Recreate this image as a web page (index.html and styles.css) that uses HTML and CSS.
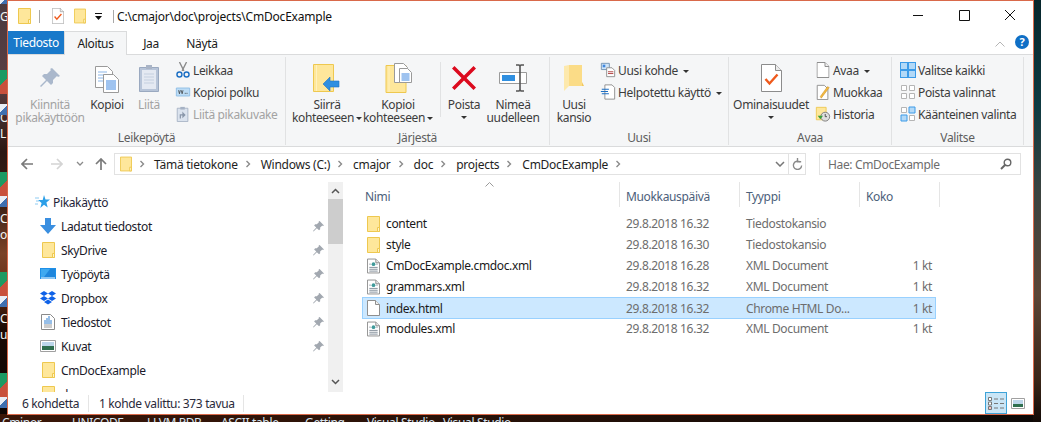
FILE: index.html
```html
<!DOCTYPE html>
<html lang="fi">
<head>
    <meta charset="UTF-8">
    <title>CmDocExample</title>
    <link rel="stylesheet" href="styles.css">
</head>
<body>
    <!-- Shared icons -->
    <svg class="sprite" width="0" height="0">
        <symbol id="i-folder" viewBox="0 0 13 16">
            <path d="M.5.5h12v15H.5z" fill="#fee79b" stroke="#eec84f"/>
            <path d="M10.5 11.5h2v4h-2z" fill="#fff4c8" stroke="#eec84f"/>
        </symbol>
        <symbol id="i-xml" viewBox="0 0 14 16">
            <path d="M.5.5h9l4 4v11H.5z" fill="#fff" stroke="#8a8a8a"/>
            <path d="M9.5.5v4h4" fill="#e8e8e8" stroke="#8a8a8a"/>
            <circle cx="7" cy="6" r="2" fill="#3f9a9a"/>
            <path d="M2.500 6h1.500M10 6h1.500M2.500 9.500h9M2.500 11.500h9M2.500 13.500h9" stroke="#7f8a96"/>
        </symbol>
        <symbol id="i-file" viewBox="0 0 13 16">
            <path d="M.5.5h8l4 4v11H.5z" fill="#fff" stroke="#8f8f8f"/>
            <path d="M8.500.5v4h4" fill="#f0f0f0" stroke="#8f8f8f"/>
        </symbol>
        <symbol id="i-pin" viewBox="0 0 20 20">
            <path d="M12 0l8 8-2 1-1-1-4 4v3l-2 2-4-4-6 6-1-1 6-6-4-4 2-2h3l4-4-1-1z"/>
        </symbol>
        <symbol id="i-check-doc" viewBox="0 0 21 28">
            <path d="M.5.500h14l6 6v21H.5z" fill="#fff" stroke="#8c8c8c"/>
            <path d="M14.500.5v6h6" fill="#ececec" stroke="#8c8c8c"/>
            <path d="M4.500 15l4 4.500 8-9" fill="none" stroke="#ef5a1c" stroke-width="2.400"/>
        </symbol>
        <symbol id="i-big-folder" viewBox="0 0 21 28">
            <path d="M.5.5h20v27H.5z" fill="#fee79b" stroke="#eec84f"/>
            <path d="M3.500 1v26" stroke="#fff1bd"/>
        </symbol>
        <symbol id="i-chev" viewBox="0 0 6 8">
            <path d="M1.500 1l3 3-3 3" fill="none" stroke="#8a8a8a" stroke-width="1.400"/>
        </symbol>
    </svg>

    <div class="desktop">
        <!-- Desktop icons and labels showing beside the window -->
        <span class="edge-label edge-gi">Gi</span>
        <span class="edge-label edge-og">Og</span>
        <span class="edge-label edge-l">L</span>
        <span class="edge-label edge-c1">C</span>
        <span class="edge-label edge-oo">oo</span>
        <span class="edge-label edge-c2">C</span>
        <span class="edge-label edge-u">u</span>
        <i class="edge-tree tree-1"></i>
        <i class="edge-tree tree-2"></i>
        <i class="edge-tree tree-3"></i>
        <i class="edge-tree tree-4"></i>
        <i class="edge-link link-0"></i>
        <i class="edge-link link-1"></i>
        <i class="edge-link link-2"></i>
        <i class="edge-link link-3"></i>
        <i class="edge-link link-4"></i>
        <span class="bottom-label bl-1">Cminor</span>
        <span class="bottom-label bl-2">UNICODE</span>
        <span class="bottom-label bl-3">LLVM PDB</span>
        <span class="bottom-label bl-4">ASCII table</span>
        <span class="bottom-label bl-5">Getting</span>
        <span class="bottom-label bl-6">Visual Studio</span>
        <span class="bottom-label bl-7">Visual Studio</span>

        <div class="window">
            <div class="titlebar">
                <svg class="qat-folder"><use href="#i-folder"/></svg>
                <i class="qat-sep"></i>
                <svg class="qat-check" viewBox="0 0 21 28"><use href="#i-check-doc"/></svg>
                <svg class="qat-folder2"><use href="#i-folder"/></svg>
                <svg class="qat-drop" viewBox="0 0 9 7"><path d="M1 0h7v1H1zM1 3h7L4.500 7z" fill="#111"/></svg>
                <i class="qat-sep"></i>
                <span class="title-text">C:\cmajor\doc\projects\CmDocExample</span>
                <div class="win-controls">
                    <svg viewBox="0 0 46 30"><path d="M18 14.500h10" stroke="#111"/></svg>
                    <svg viewBox="0 0 46 30"><path d="M18.500 9.500h10v10h-10z" fill="none" stroke="#111"/></svg>
                    <svg viewBox="0 0 46 30"><path d="M18 9l10 10M28 9L18 19" stroke="#111"/></svg>
                </div>
            </div>

            <div class="tabs">
                <span class="tab tab-file">Tiedosto</span>
                <span class="tab tab-active">Aloitus</span>
                <span class="tab tab-share">Jaa</span>
                <span class="tab tab-view">Näytä</span>
                <svg class="collapse" viewBox="0 0 10 6"><path d="M.5 5.500L5 1l4.500 4.500" fill="none" stroke="#b5b5b5"/></svg>
                <span class="help">?</span>
            </div>

            <div class="ribbon">
                <!-- Leikepöytä -->
                <div class="group group-clip">
                    <div class="group-body">
                        <div class="big disabled w-pin">
                            <div class="big-icon"><svg class="ico-pin" width="20" height="20"><use href="#i-pin"/></svg></div>
                            <div>Kiinnitä<br>pikakäyttöön</div>
                        </div>
                        <div class="big w-copy">
                            <div class="big-icon">
                                <svg width="24" height="30" viewBox="0 0 24 30">
                                    <path d="M.5 3.500h12l5 5v16H.5z" fill="#fff" stroke="#9a9a9a"/>
                                    <path d="M3 9h9M3 12h9M3 15h9M3 18h9" stroke="#8db7e8"/>
                                    <path d="M8.500 11.500h10l5 5v13h-15z" fill="#fff" stroke="#9a9a9a"/>
                                    <path d="M11 18h10M11 20h10M11 22h10M11 24h10M11 26h10" stroke="#3f87e0"/>
                                </svg>
                            </div>
                            <div>Kopioi</div>
                        </div>
                        <div class="big disabled w-paste">
                            <div class="big-icon">
                                <svg width="20" height="30" viewBox="0 0 20 30">
                                    <path d="M.5 4.500h19v24H.5z" fill="#b7c4d8" stroke="#9aa9c0"/>
                                    <path d="M3 7h14v19H3z" fill="#e4e9f2"/>
                                    <path d="M5 11h10M5 14h10M5 17h10M5 20h10" stroke="#c4cfdf"/>
                                    <path d="M7 2h6v4H7z" fill="#a9b4c6"/>
                                </svg>
                            </div>
                            <div>Liitä</div>
                        </div>
                        <div class="small-col col-clip">
                            <div class="small">
                                <svg viewBox="0 0 16 18">
                                    <path d="M4 0l5 10M12 0L7 10" stroke="#8a8a8a" stroke-width="1.500"/>
                                    <circle cx="4" cy="14" r="2.800" fill="none" stroke="#1c6fc4" stroke-width="1.600"/>
                                    <circle cx="12" cy="14" r="2.800" fill="none" stroke="#1c6fc4" stroke-width="1.600"/>
                                </svg>
                                <span>Leikkaa</span>
                            </div>
                            <div class="small">
                                <svg viewBox="0 0 16 18">
                                    <path d="M.5 4.500h15v9H.5z" fill="#bcdcf5" stroke="#8dbde6"/>
                                    <path d="M3 7l1 4 1-4M6 7l1 4 1-4" fill="none" stroke="#333" stroke-width=".8"/>
                                    <path d="M10 10.500h1M12 10.500h1" stroke="#333"/>
                                </svg>
                                <span>Kopioi polku</span>
                            </div>
                            <div class="small disabled">
                                <svg viewBox="0 0 16 18">
                                    <path d="M1.500 2.500h12v15h-12z" fill="#dbe3ee" stroke="#a6b2c4"/>
                                    <path d="M5 1h5v3H5z" fill="#a6b2c4"/>
                                    <path d="M5 14V10h4M8 8l2 2-2 2z" fill="none" stroke="#8a97aa" stroke-width="1.400"/>
                                </svg>
                                <span>Liitä pikakuvake</span>
                            </div>
                        </div>
                    </div>
                    <div class="group-label">Leikepöytä</div>
                </div>

                <!-- Järjestä -->
                <div class="group group-org">
                    <div class="group-body">
                        <div class="big w-move">
                            <div class="big-icon">
                                <svg width="28" height="28" viewBox="0 0 28 28">
                                    <use href="#i-big-folder" width="21" height="28"/>
                                    <path d="M10 20l7-7v4h9v6h-9v4z" fill="#2f8fe0" stroke="#1f74c4" stroke-width=".6"/>
                                </svg>
                            </div>
                            <div>Siirrä<br>kohteeseen<i class="caret caret-inline"></i></div>
                        </div>
                        <div class="big w-copyto">
                            <div class="big-icon">
                                <svg width="27" height="30" viewBox="0 0 27 30">
                                    <use href="#i-big-folder" y="2" width="22" height="28"/>
                                    <path d="M9.500 .5h9l4 4v15h-13z" fill="#fff" stroke="#9a9a9a"/>
                                    <path d="M14.500 5.500h8l4 4v10h-12z" fill="#fff" stroke="#9a9a9a"/>
                                    <path d="M16.500 11h8M16.500 13h8M16.500 15h8M16.500 17h8" stroke="#3f87e0"/>
                                </svg>
                            </div>
                            <div>Kopioi<br>kohteeseen<i class="caret caret-inline"></i></div>
                        </div>
                        <i class="inner-sep"></i>
                        <div class="big w-del">
                            <div class="big-icon">
                                <svg width="26" height="26" viewBox="0 0 26 26"><path d="M3.500 1L13 10.500 22.500 1 25 3.500 15.500 13 25 22.500 22.500 25 13 15.500 3.500 25 1 22.500 10.500 13 1 3.500z" fill="#dc0a1e"/></svg>
                            </div>
                            <div>Poista</div>
                            <i class="caret caret-line"></i>
                        </div>
                        <div class="big w-ren">
                            <div class="big-icon">
                                <svg width="28" height="28" viewBox="0 0 28 28">
                                    <path d="M.5 8.500h27v11H.5z" fill="#fff" stroke="#9a9a9a"/>
                                    <path d="M3 11h13v6H3z" fill="#2f8fe0"/>
                                    <path d="M17 1h3l1 1 1-1h3M21 2v24M17 27h3l1-1 1 1h3" fill="none" stroke="#555" stroke-width="1.600"/>
                                </svg>
                            </div>
                            <div>Nimeä<br>uudelleen</div>
                        </div>
                    </div>
                    <div class="group-label">Järjestä</div>
                </div>

                <!-- Uusi -->
                <div class="group group-new">
                    <div class="group-body">
                        <div class="big w-newf">
                            <div class="big-icon">
                                <svg width="20" height="28" viewBox="0 0 20 28">
                                    <path d="M5 1h13v21H5z" fill="#fbdc87"/>
                                    <path d="M0 2l5-1v21l-5 5z" fill="#fde9ad"/>
                                    <path d="M5 22h15l-2-4v4z" fill="#f2c85e"/>
                                </svg>
                            </div>
                            <div>Uusi<br>kansio</div>
                        </div>
                        <div class="small-col col-new">
                            <div class="small">
                                <svg viewBox="0 0 16 18">
                                    <path d="M.5 1.500h9v7h-9z" fill="#cfe4f7" stroke="#6f8fb0"/>
                                    <path d="M2 3h3v3H2z" fill="#3f87e0"/>
                                    <path d="M6.500 6.500h6l3 3v7h-9z" fill="#fff" stroke="#8a8a8a"/>
                                    <path d="M8 11h6M8 13h6" stroke="#a33"/>
                                </svg>
                                <span>Uusi kohde<i class="caret caret-after"></i></span>
                            </div>
                            <div class="small">
                                <svg viewBox="0 0 16 18">
                                    <path d="M4.500 1h8l3 3v13h-11z" fill="#fff" stroke="#8a8a8a"/>
                                    <path d="M1 6h8M0 8.500h8M1 11h8" stroke="#1c6fc4" stroke-width="1.200"/>
                                </svg>
                                <span>Helpotettu käyttö<i class="caret caret-after"></i></span>
                            </div>
                        </div>
                    </div>
                    <div class="group-label">Uusi</div>
                </div>

                <!-- Avaa -->
                <div class="group group-open">
                    <div class="group-body">
                        <div class="big w-prop">
                            <div class="big-icon"><svg width="21" height="28"><use href="#i-check-doc"/></svg></div>
                            <div>Ominaisuudet</div>
                            <i class="caret caret-line"></i>
                        </div>
                        <div class="small-col col-open">
                            <div class="small">
                                <svg viewBox="0 0 13 16"><use href="#i-file"/></svg>
                                <span>Avaa<i class="caret caret-after"></i></span>
                            </div>
                            <div class="small">
                                <svg viewBox="0 0 16 18">
                                    <path d="M1.500 1.500h8l4 4v12h-12z" fill="#fff" stroke="#8a8a8a"/>
                                    <path d="M5 14l1 2 9-12-2-1z" fill="#f4b940" stroke="#c98f20" stroke-width=".6"/>
                                </svg>
                                <span>Muokkaa</span>
                            </div>
                            <div class="small">
                                <svg viewBox="0 0 16 18">
                                    <path d="M.5 1.500h11v14H.5z" fill="#fee79b" stroke="#eec84f"/>
                                    <circle cx="10.500" cy="12" r="5" fill="#dedede" stroke="#777"/>
                                    <path d="M10.500 9v3h2" fill="none" stroke="#444"/>
                                    <path d="M2 11l3 4 3-4z" fill="#3aa03a"/>
                                </svg>
                                <span>Historia</span>
                            </div>
                        </div>
                    </div>
                    <div class="group-label">Avaa</div>
                </div>

                <!-- Valitse -->
                <div class="group group-select">
                    <div class="group-body">
                        <div class="small-col">
                            <div class="small">
                                <svg viewBox="0 0 16 16">
                                    <path d="M0 0h16v16H0z" fill="#3c9be8"/>
                                    <path d="M1 1h6v6H1zM9 1h6v6H9zM1 9h6v6H1zM9 9h6v6H9z" fill="#b3d9f7"/>
                                </svg>
                                <span>Valitse kaikki</span>
                            </div>
                            <div class="small">
                                <svg viewBox="0 0 16 16">
                                    <path d="M1.500 1.500h5v5h-5zM9.500 1.500h5v5h-5zM1.500 9.500h5v5h-5zM9.500 9.500h5v5h-5z" fill="#fff" stroke="#b5b5b5"/>
                                </svg>
                                <span>Poista valinnat</span>
                            </div>
                            <div class="small">
                                <svg viewBox="0 0 16 16">
                                    <path d="M1.500 1.500h5v5h-5zM9.500 9.500h5v5h-5z" fill="#fff" stroke="#b5b5b5"/>
                                    <path d="M9 1h6v6H9zM1 9h6v6H1z" fill="#b3d9f7" stroke="#3c9be8"/>
                                </svg>
                                <span>Käänteinen valinta</span>
                            </div>
                        </div>
                    </div>
                    <div class="group-label">Valitse</div>
                </div>
            </div>

            <div class="addressbar">
                <svg class="nav-arrow" viewBox="0 0 12 12"><path d="M6 1L1 6l5 5M1 6h11" fill="none" stroke="#7a7a7a" stroke-width="1.700"/></svg>
                <svg class="nav-arrow nav-fwd" viewBox="0 0 12 12"><path d="M6 1l5 5-5 5M11 6H0" fill="none" stroke="#d4d4d4" stroke-width="1.700"/></svg>
                <svg class="nav-down" viewBox="0 0 8 5"><path d="M1 1l3 3 3-3" fill="none" stroke="#8a8a8a" stroke-width="1.300"/></svg>
                <svg class="nav-arrow nav-up" viewBox="0 0 12 12"><path d="M1 6l5-5 5 5M6 1v11" fill="none" stroke="#7a7a7a" stroke-width="1.700"/></svg>
                <div class="path-box">
                    <svg class="path-folder"><use href="#i-folder"/></svg>
                    <svg class="crumb-chev crumb-first"><use href="#i-chev"/></svg>
                    <span>Tämä tietokone</span>
                    <svg class="crumb-chev"><use href="#i-chev"/></svg>
                    <span>Windows (C:)</span>
                    <svg class="crumb-chev"><use href="#i-chev"/></svg>
                    <span>cmajor</span>
                    <svg class="crumb-chev"><use href="#i-chev"/></svg>
                    <span>doc</span>
                    <svg class="crumb-chev"><use href="#i-chev"/></svg>
                    <span>projects</span>
                    <svg class="crumb-chev"><use href="#i-chev"/></svg>
                    <span>CmDocExample</span>
                    <svg class="crumb-chev"><use href="#i-chev"/></svg>
                    <div class="path-tools">
                        <svg class="path-drop" viewBox="0 0 10 6"><path d="M1 1l4 4 4-4" fill="none" stroke="#777" stroke-width="1.500"/></svg>
                        <div class="path-refresh">
                            <svg viewBox="0 0 12 14"><path d="M9 4.500A4.500 4.500 0 1 0 10.500 8M6 0v4h4" fill="none" stroke="#8a8a8a" stroke-width="1.500"/></svg>
                        </div>
                    </div>
                </div>
                <div class="search-box">
                    <span>Hae: CmDocExample</span>
                    <svg viewBox="0 0 12 12"><circle cx="7.500" cy="4.500" r="3.300" fill="none" stroke="#666" stroke-width="1.400"/><path d="M5 7l-4 4" stroke="#666" stroke-width="2"/></svg>
                </div>
            </div>

            <div class="main">
                <div class="nav">
                    <div class="nav-head">
                        <svg viewBox="0 0 15 14"><path d="M9 0l1.500 4.500H15l-3.600 3 1.300 5-3.700-2.800L5.300 13l1.300-5-3.600-3h4.700z" fill="#2b9fe8"/><path d="M0 3h4M1 6h3M0 9h3" stroke="#8ecbf2"/></svg>
                        <span>Pikakäyttö</span>
                    </div>
                    <div class="nav-row">
                        <svg viewBox="0 0 16 16"><path d="M5 0h6v7h5l-8 9-8-9h5z" fill="#3a8fe0"/></svg>
                        <span>Ladatut tiedostot</span>
                        <svg class="pin"><use href="#i-pin"/></svg>
                    </div>
                    <div class="nav-row">
                        <svg class="nav-folder"><use href="#i-folder"/></svg>
                        <span>SkyDrive</span>
                        <svg class="pin"><use href="#i-pin"/></svg>
                    </div>
                    <div class="nav-row">
                        <svg viewBox="0 0 16 16"><path d="M0 2h16v11H0z" fill="#1e90e8"/><path d="M1 3h14v8H1z" fill="#3fa9f0"/><path d="M10 3h5v8H4z" fill="#1f86dc"/><path d="M1 12h14" stroke="#fff"/></svg>
                        <span>Työpöytä</span>
                        <svg class="pin"><use href="#i-pin"/></svg>
                    </div>
                    <div class="nav-row">
                        <svg viewBox="0 0 16 16"><path d="M4 1l4 2.500L4 6 0 3.500zM12 1l4 2.500L12 6 8 3.500zM4 6l4 2.500L4 11 0 8.500zM12 6l4 2.500L12 11 8 8.500zM8 9.500l4 2.500-4 2.500L4 12z" fill="#0f62e8"/></svg>
                        <span>Dropbox</span>
                        <svg class="pin"><use href="#i-pin"/></svg>
                    </div>
                    <div class="nav-row">
                        <svg viewBox="0 0 14 16"><path d="M.5.500h9l4 4v11H.5z" fill="#fff" stroke="#8a8a8a"/><path d="M7 3h2M5 5h4M3 7h8M3 9h8" stroke="#2f7fd0"/><path d="M3 11h8M3 13h8" stroke="#9a9a9a"/></svg>
                        <span>Tiedostot</span>
                        <svg class="pin"><use href="#i-pin"/></svg>
                    </div>
                    <div class="nav-row">
                        <svg viewBox="0 0 16 12"><path d="M.5.500h15v11H.5z" fill="#fff" stroke="#a0a0a0"/><path d="M2 2h12v4H2z" fill="#bcd6ea"/><path d="M2 6h12v4H2z" fill="#2f6f4f"/></svg>
                        <span>Kuvat</span>
                        <svg class="pin"><use href="#i-pin"/></svg>
                    </div>
                    <div class="nav-row">
                        <svg class="nav-folder"><use href="#i-folder"/></svg>
                        <span>CmDocExample</span>
                    </div>
                    <div class="nav-row">
                        <svg class="nav-folder"><use href="#i-folder"/></svg>
                        <span>doc</span>
                    </div>
                </div>

                <div class="scrollbar">
                    <svg viewBox="0 0 9 6"><path d="M1 5l3.500-3.500L8 5" fill="none" stroke="#555" stroke-width="1.500"/></svg>
                    <div class="thumb"></div>
                    <svg class="scroll-down" viewBox="0 0 9 6"><path d="M1 1l3.500 3.500L8 1" fill="none" stroke="#555" stroke-width="1.500"/></svg>
                </div>

                <div class="files">
                    <div class="file-head">
                        <span class="col-name">Nimi<svg class="sort" viewBox="0 0 9 5"><path d="M.5 4.500l4-4 4 4" fill="none" stroke="#9a9a9a"/></svg></span>
                        <span>Muokkauspäivä</span>
                        <span>Tyyppi</span>
                        <span>Koko</span>
                    </div>
                    <div class="file-row">
                        <span class="file-name"><svg class="ico-file"><use href="#i-folder"/></svg>content</span>
                        <span>29.8.2018 16.32</span>
                        <span>Tiedostokansio</span>
                        <span class="file-size"></span>
                    </div>
                    <div class="file-row">
                        <span class="file-name"><svg class="ico-file"><use href="#i-folder"/></svg>style</span>
                        <span>29.8.2018 16.30</span>
                        <span>Tiedostokansio</span>
                        <span class="file-size"></span>
                    </div>
                    <div class="file-row">
                        <span class="file-name"><svg class="ico-file"><use href="#i-xml"/></svg>CmDocExample.cmdoc.xml</span>
                        <span>29.8.2018 16.28</span>
                        <span>XML Document</span>
                        <span class="file-size">1 kt</span>
                    </div>
                    <div class="file-row">
                        <span class="file-name"><svg class="ico-file"><use href="#i-xml"/></svg>grammars.xml</span>
                        <span>29.8.2018 16.32</span>
                        <span>XML Document</span>
                        <span class="file-size">1 kt</span>
                    </div>
                    <div class="file-row selected">
                        <span class="file-name"><svg class="ico-file"><use href="#i-file"/></svg>index.html</span>
                        <span>29.8.2018 16.32</span>
                        <span>Chrome HTML Do...</span>
                        <span class="file-size">1 kt</span>
                    </div>
                    <div class="file-row">
                        <span class="file-name"><svg class="ico-file"><use href="#i-xml"/></svg>modules.xml</span>
                        <span>29.8.2018 16.32</span>
                        <span>XML Document</span>
                        <span class="file-size">1 kt</span>
                    </div>
                </div>
            </div>

            <div class="statusbar">
                <span class="status-count">6 kohdetta</span>
                <span class="status-sel">1 kohde valittu: 373 tavua</span>
                <div class="view-btns">
                    <div class="view-details">
                        <svg viewBox="0 0 17 13"><path d="M.5.500h3v3h-3zM.5 5h3v3h-3zM.5 9.500h3v3h-3z" fill="#fff" stroke="#777"/><path d="M1.500 10.500h1v1h-1z" fill="#d11"/><path d="M6 2h4M12 2h4M6 6.500h4M12 6.500h4M6 11h4M12 11h4" stroke="#777"/></svg>
                    </div>
                    <svg class="view-thumbs" viewBox="0 0 14 11"><path d="M.5.500h13v10H.5z" fill="#fff" stroke="#a0a0a0"/><path d="M2 2h10v4H2z" fill="#bcd6ea"/><path d="M2 6h10v3H2z" fill="#2f6f4f"/></svg>
                </div>
            </div>
        </div>
    </div>
</body>
</html>
```

FILE: styles.css
```css
* {
    margin: 0;
    padding: 0;
    box-sizing: border-box;
}

body {
    font-family: "Noto Sans", sans-serif;
    font-size: 12px;
    letter-spacing: -0.35px;
    overflow: hidden;
}

.sprite {
    position: absolute;
}

svg {
    display: block;
    flex-shrink: 0;
}

.desktop {
    position: relative;
    width: 1041px;
    height: 422px;
    overflow: hidden;
    padding-left: 7px;
    background:
        linear-gradient(180deg, #06262c 0%, #0f3a42 25%, #3a4340 45%, #5c4536 70%, #3a2618 90%, #120a06 100%) right top / 8px 100% no-repeat,
        linear-gradient(90deg, #3a1608 0%, #2a1208 40%, #0c0806 100%) left bottom / 100% 8px no-repeat,
        linear-gradient(180deg, #4a3a40 0%, #5a3f42 20%, #2c1712 36%, #3a1f14 48%, #7a4228 60%, #6a3018 68%, #1c0a04 78%, #0a0504 100%);
}

/* desktop bits next to the window */
.edge-label {
    position: absolute;
    left: 0;
    color: #f4f4f4;
    line-height: 14px;
}

.edge-gi { top: 10px; }
.edge-og { top: 111px; }
.edge-l { top: 127px; }
.edge-c1 { top: 212px; }
.edge-oo { top: 228px; }
.edge-c2 { top: 312px; }
.edge-u { top: 328px; }

.edge-tree {
    position: absolute;
    left: 0;
    width: 7px;
    height: 24px;
    background: linear-gradient(135deg, #1c9a62 50%, #c8503c 50%);
}

.tree-1 { top: 70px; }
.tree-2 { top: 172px; }
.tree-3 { top: 272px; }
.tree-4 { top: 373px; }

.edge-link {
    position: absolute;
    left: 0;
    width: 7px;
    height: 11px;
    background: linear-gradient(135deg, #e8eef6 45%, #3f6fb0 45%);
}

.link-0 { top: 0; height: 4px; }
.link-1 { top: 104px; }
.link-2 { top: 196px; }
.link-3 { top: 296px; }
.link-4 { top: 397px; }

.bottom-label {
    position: absolute;
    top: 415px;
    color: #d8e4f0;
    line-height: 16px;
    white-space: nowrap;
}

.bl-1 { left: 2px; }
.bl-2 { left: 72px; }
.bl-3 { left: 147px; }
.bl-4 { left: 221px; }
.bl-5 { left: 305px; }
.bl-6 { left: 367px; }
.bl-7 { left: 443px; }

/* window */
.window {
    position: relative;
    width: 1027px;
    height: 415px;
    background: #fff;
    border: 1px solid #d9694a;
    display: flex;
    flex-direction: column;
    color: #1a1a1a;
}

.titlebar {
    height: 30px;
    display: flex;
    align-items: center;
    padding-left: 10px;
}

.qat-folder {
    width: 13px;
    height: 16px;
}

.qat-sep {
    width: 1px;
    height: 13px;
    margin: 0 11px 0 8px;
    background: #a8a8a8;
}

.qat-check {
    width: 12px;
    height: 16px;
    margin-left: 1px;
}

.qat-folder2 {
    width: 12px;
    height: 16px;
    margin-left: 10px;
}

.qat-drop {
    width: 9px;
    height: 7px;
    margin-left: 8px;
    margin-right: 2px;
}

.title-text {
    color: #111;
    margin-left: -8px;
    letter-spacing: -0.2px;
}

.win-controls {
    display: flex;
    margin-left: auto;
}

.win-controls svg {
    width: 46px;
    height: 30px;
}

.tabs {
    height: 24px;
    display: flex;
    align-items: stretch;
    border-bottom: 1px solid #dadbdc;
    padding-right: 4px;
}

.tab {
    display: flex;
    align-items: center;
    justify-content: center;
    height: 24px;
}

.tab-file {
    width: 56px;
    height: 23px;
    background: #1979ca;
    color: #fff;
}

.tab-active {
    width: 63px;
    background: #f5f6f7;
    border: 1px solid #dadbdc;
    border-bottom: none;
}

.tab-share {
    width: 48px;
}

.tab-view {
    width: 54px;
}

.collapse {
    width: 10px;
    height: 6px;
    margin: 10px 0 0 auto;
}

.help {
    width: 14px;
    height: 14px;
    margin: 4px 0 0 10px;
    border-radius: 50%;
    background: #0f6fc6;
    color: #fff;
    font-size: 11px;
    font-weight: 700;
    line-height: 14px;
    text-align: center;
}

/* ribbon */
.ribbon {
    height: 92px;
    display: flex;
    background: #f5f6f7;
    border-bottom: 1px solid #dadbdc;
}

.group {
    height: 88px;
    margin-top: 2px;
    display: flex;
    flex-direction: column;
    border-right: 1px solid #e1e2e3;
    color: #3c3c3c;
}

.group-clip { width: 278px; }
.group-org { width: 264px; }
.group-new { width: 179px; }
.group-open { width: 163px; }
.group-select { width: 132px; }

.group-body {
    height: 73px;
    display: flex;
}

.group-clip .group-body { padding-left: 8px; }
.group-org .group-body { padding-left: 5px; }
.group-new .group-body { padding-left: 4px; }
.group-open .group-body { padding-left: 6px; }
.group-select .group-body { padding-left: 8px; }

.group-label {
    text-align: center;
    color: #5e5e5e;
    line-height: 15px;
}

.big {
    display: flex;
    flex-direction: column;
    align-items: center;
    text-align: center;
    line-height: 13px;
    white-space: nowrap;
}

.big-icon {
    height: 41px;
    padding-top: 1px;
    display: flex;
    align-items: center;
    justify-content: center;
}

.w-pin { width: 68px; }
.w-copy { width: 46px; }
.w-paste { width: 38px; }
.w-move { width: 72px; }
.w-copyto { width: 70px; }
.w-del { width: 46px; }
.w-ren { width: 52px; }
.w-newf { width: 40px; }
.w-prop { width: 72px; }

.disabled {
    color: #a3a3a3;
}

.ico-pin {
    fill: #aab8cc;
}

.inner-sep {
    width: 1px;
    height: 55px;
    margin: 5px 0 0 7px;
    background: #e1e2e3;
}

.small-col {
    display: flex;
    flex-direction: column;
    padding-top: 2px;
}

.col-clip { margin-left: 7px; }
.col-new { margin-left: 6px; }
.col-open { margin-left: 8px; }

.small {
    height: 22px;
    display: flex;
    align-items: center;
    gap: 2px;
    white-space: nowrap;
}

.small svg {
    width: 16px;
    height: 16px;
}

.caret {
    display: inline-block;
    width: 0;
    height: 0;
    border-left: 3px solid transparent;
    border-right: 3px solid transparent;
    border-top: 3px solid #333;
}

.caret-inline {
    margin-left: 2px;
    vertical-align: 2px;
}

.caret-line {
    margin-top: 5px;
}

.caret-after {
    margin-left: 5px;
    vertical-align: 2px;
}

/* address row */
.addressbar {
    height: 33px;
    display: flex;
    align-items: flex-start;
    padding-top: 6px;
}

.nav-arrow {
    width: 12px;
    height: 12px;
    margin: 5px 0 0 13px;
}

.nav-fwd {
    margin-left: 18px;
}

.nav-down {
    width: 8px;
    height: 5px;
    margin: 8px 0 0 13px;
}

.nav-up {
    margin-left: 11px;
}

.path-box {
    width: 692px;
    height: 22px;
    margin-left: 7px;
    border: 1px solid #e2e2e2;
    display: flex;
    align-items: center;
    padding-left: 5px;
    color: #1e1e1e;
    letter-spacing: -0.25px;
}

.path-folder {
    width: 12px;
    height: 16px;
}

.crumb-chev {
    width: 6px;
    height: 8px;
    margin: 0 10px 0 7px;
}

.crumb-first {
    margin-right: 9px;
}

.path-tools {
    margin-left: auto;
    display: flex;
    align-items: center;
    height: 100%;
}

.path-drop {
    width: 10px;
    height: 6px;
    margin-right: 3px;
}

.path-refresh {
    width: 17px;
    height: 100%;
    border-left: 1px solid #e2e2e2;
    display: flex;
    align-items: center;
    justify-content: center;
}

.path-refresh svg {
    width: 11px;
    height: 13px;
}

.search-box {
    width: 202px;
    height: 22px;
    margin-left: 13px;
    border: 1px solid #e2e2e2;
    display: flex;
    align-items: center;
    justify-content: space-between;
    padding: 0 8px;
    color: #6d6d6d;
}

.search-box svg {
    width: 12px;
    height: 12px;
}

/* main area */
.main {
    height: 212px;
    display: flex;
    overflow: hidden;
}

.nav {
    width: 320px;
    padding-top: 10px;
}

.nav-head {
    height: 24px;
    display: flex;
    align-items: center;
    gap: 3px;
    padding-left: 27px;
    color: #1f1f3a;
}

.nav-head svg {
    width: 15px;
    height: 14px;
}

.nav-row {
    height: 24px;
    display: flex;
    align-items: center;
    gap: 5px;
    padding: 0 4px 0 32px;
    color: #1a1a2a;
}

.nav-row svg {
    width: 16px;
    height: 16px;
}

.nav-row .nav-folder {
    width: 13px;
    height: 16px;
    margin: 0 1px 0 2px;
}

.nav-row .pin {
    width: 11px;
    height: 11px;
    margin-left: auto;
    fill: #a2a8b0;
}

.scrollbar {
    width: 15px;
    margin-top: 2px;
    background: #f0f0f0;
    display: flex;
    flex-direction: column;
    align-items: center;
}

.scrollbar svg {
    width: 9px;
    height: 6px;
    margin-top: 6px;
}

.thumb {
    width: 15px;
    height: 45px;
    margin-top: 5px;
    background: #cdcdcd;
}

.scrollbar .scroll-down {
    margin-top: auto;
    margin-bottom: 7px;
}

.files {
    flex: 1;
    padding: 2px 0 0 19px;
}

.file-head {
    position: relative;
    width: 582px;
    height: 25px;
    margin: 0 0 6px -4px;
    display: grid;
    grid-template-columns: 262px 120px 120px 80px;
    color: #4c607a;
}

.file-head span {
    display: flex;
    align-items: center;
    padding: 3px 0 0 6px;
    border-right: 1px solid #e5e5e5;
}

.file-head .col-name {
    padding-left: 7px;
}

.sort {
    position: absolute;
    left: 127px;
    top: 0;
    width: 9px;
    height: 5px;
}

.file-row {
    width: 574px;
    height: 21px;
    display: grid;
    grid-template-columns: 264px 120px 120px 70px;
    align-items: center;
    color: #6d6d6d;
}

.selected {
    height: 22px;
    margin-bottom: -1px;
    background: #cce8ff;
    outline: 1px solid #99d1ff;
    outline-offset: -1px;
}

.file-name {
    display: flex;
    align-items: center;
    gap: 6px;
    padding-left: 5px;
    color: #1a1a1a;
}

.ico-file {
    width: 13px;
    height: 16px;
}

.file-size {
    text-align: right;
    padding-right: 4px;
}

/* status bar */
.statusbar {
    height: 22px;
    display: flex;
    align-items: center;
    padding-left: 14px;
    color: #2a2a3a;
    white-space: nowrap;
}

.status-count {
    width: 67px;
    border-right: 1px solid #e5e5e5;
}

.status-sel {
    width: 155px;
    padding-left: 10px;
    border-right: 1px solid #e5e5e5;
}

.view-btns {
    margin-left: auto;
    display: flex;
    align-items: center;
    gap: 4px;
    margin-right: 8px;
}

.view-details {
    width: 22px;
    height: 22px;
    background: #c9e5f6;
    border: 1px solid #3ea3d8;
    display: flex;
    align-items: center;
    justify-content: center;
}

.view-details svg {
    width: 17px;
    height: 13px;
}

.view-thumbs {
    width: 14px;
    height: 11px;
}
```
